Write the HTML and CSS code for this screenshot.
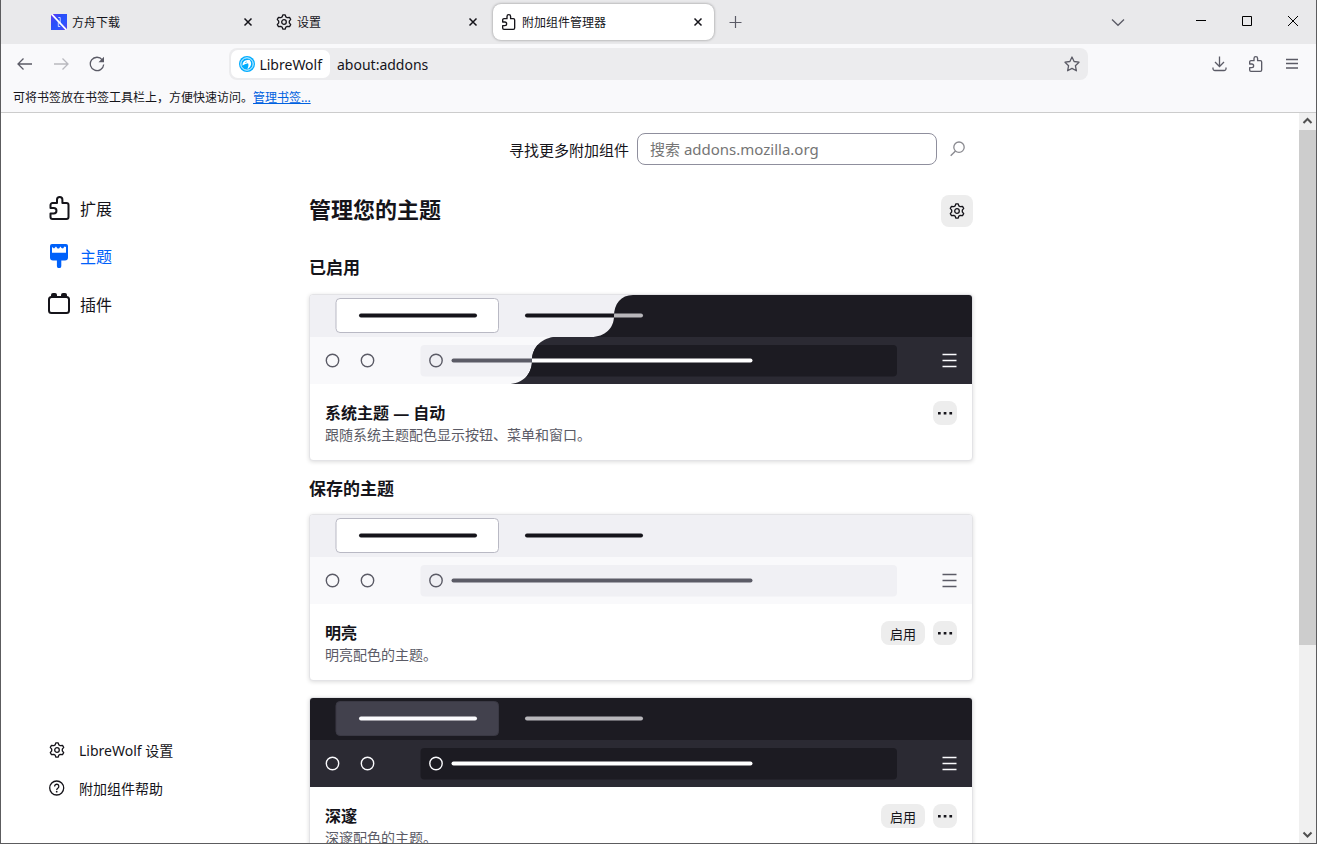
FILE: index.html
```html
<!DOCTYPE html>
<html lang="zh-CN">
<head>
<meta charset="utf-8">
<title>附加组件管理器</title>
<link rel="stylesheet" href="styles.css">
</head>
<body>
<svg class="defs" aria-hidden="true">
  <defs>
    <linearGradient id="ark-fill" x1="0" y1="0" x2="1" y2="1">
      <stop offset="0" stop-color="#6a35f5"/><stop offset=".35" stop-color="#2a4df8"/><stop offset=".65" stop-color="#2a55ff"/><stop offset="1" stop-color="#5a3cf0"/>
    </linearGradient>
    <clipPath id="dark-half">
      <path d="M323 0C311 0 304 9 304 21S295 42 281 42H247C232 42 222 52 222 65.500S213 89 198 89H662V0Z"/>
    </clipPath>
  </defs>
  <symbol id="gear" viewBox="0 0 16 16">
    <g fill="none" stroke="currentColor" stroke-width="1.300" stroke-linejoin="round">
      <path d="M6.900 .8H9.100L9.900 2.900 11.300 3.700 13.500 3.300 14.700 5.300 13.300 7.100V8.900L14.700 10.700 13.500 12.700 11.300 12.300 9.900 13.100 9.100 15.200H6.900L6.100 13.100 4.700 12.300 2.500 12.700 1.300 10.700 2.700 8.900V7.100L1.300 5.300 2.500 3.300 4.700 3.700 6.100 2.900Z"/>
      <circle cx="8" cy="8" r="2.300"/>
    </g>
  </symbol>
  <symbol id="puzzle" viewBox="0 0 24 24">
    <path d="M2.500 12V9a2 2 0 0 1 2-2H9V3.700a2.700 2.700 0 0 1 5.400 0V7H18.500a2 2 0 0 1 2 2V21a2 2 0 0 1-2 2H4.500a2 2 0 0 1-2-2V17.500H5.700a2.700 2.700 0 0 0 0-5.500Z" fill="none" stroke="currentColor" stroke-width="2" stroke-linejoin="round"/>
  </symbol>
  <symbol id="cross" viewBox="0 0 16 16">
    <path d="M4.500 4.500L11.500 11.500M11.500 4.500L4.500 11.500" fill="none" stroke="currentColor" stroke-width="1.500"/>
  </symbol>
  <symbol id="dots" viewBox="0 0 16 16">
    <path d="M1 7h2.700v2.500H1zM6.700 7h2.700v2.500H6.700zM12.400 7h2.700v2.500h-2.700z" fill="currentColor"/>
  </symbol>
  <symbol id="preview" viewBox="0 0 662 89">
    <rect class="pv-frame" width="662" height="43"/>
    <rect class="pv-toolbar" y="42" width="662" height="47"/>
    <rect class="pv-tab" x="26" y="3.500" width="162.500" height="34" rx="4"/>
    <rect class="pv-text" x="49" y="18.500" width="118" height="4" rx="2"/>
    <rect class="pv-text2" x="215" y="18.500" width="118" height="4" rx="2"/>
    <rect class="pv-field" x="110.500" y="50" width="476.500" height="31.500" rx="4"/>
    <g class="pv-icon">
      <circle cx="22.500" cy="65.500" r="6.200"/><circle cx="57.500" cy="65.500" r="6.200"/><circle cx="126" cy="65.500" r="6.200"/>
      <path d="M632.500 59.500h14M632.500 65.500h14M632.500 71.500h14"/>
    </g>
    <rect class="pv-line" x="141.500" y="63.500" width="301" height="4" rx="2"/>
  </symbol>
</svg>

<header class="chrome">
  <div class="tabbar">
    <div class="tabs">
      <div class="tab">
        <svg class="i16" viewBox="0 0 16 16"><path d="M0 0H16V16H0Z" fill="url(#ark-fill)"/><path d="M.5 0L15.500 16" stroke="#fff" stroke-width="1.700"/><path d="M7.300 3.500H9.200V10.500M7.300 7V12.500H9.200" fill="none" stroke="#fff" stroke-opacity=".75" stroke-width="1"/></svg>
        <span class="tab-label">方舟下载</span>
        <button class="close" aria-label="关闭标签页"><svg class="i16"><use href="#cross"/></svg></button>
      </div>
      <div class="tab">
        <svg class="i16"><use href="#gear"/></svg>
        <span class="tab-label">设置</span>
        <button class="close" aria-label="关闭标签页"><svg class="i16"><use href="#cross"/></svg></button>
      </div>
      <div class="tab active">
        <svg class="i16"><use href="#puzzle"/></svg>
        <span class="tab-label">附加组件管理器</span>
        <button class="close" aria-label="关闭标签页"><svg class="i16"><use href="#cross"/></svg></button>
      </div>
      <button class="newtab" aria-label="新建标签页"><svg class="i16" viewBox="0 0 16 16"><path d="M7.500 2V14M1.500 8.500H13.500" stroke="currentColor" stroke-width="1.200"/></svg></button>
    </div>
    <button class="alltabs" aria-label="列出所有标签页"><svg class="i16" viewBox="0 0 16 16"><path d="M2 5.500L8 11.300 14 5.500" fill="none" stroke="currentColor" stroke-width="1.300"/></svg></button>
    <div class="window-buttons">
      <button aria-label="最小化"><svg viewBox="0 0 12 12"><path d="M1 5.500H11"/></svg></button>
      <button aria-label="最大化"><svg viewBox="0 0 12 12"><path d="M1.500 1.500H10.500V10.500H1.500Z"/></svg></button>
      <button aria-label="关闭"><svg viewBox="0 0 12 12"><path d="M1 1L11 11M11 1L1 11"/></svg></button>
    </div>
  </div>

  <div class="navbar">
    <button class="nav" aria-label="后退"><svg class="i16" viewBox="0 0 16 16"><path d="M6.500 2.500L1 8 6.500 13.500M1 8H15" fill="none" stroke="currentColor" stroke-width="1.300"/></svg></button>
    <button class="nav" aria-label="前进" disabled><svg class="i16" viewBox="0 0 16 16"><path d="M9.500 2.500L15 8 9.500 13.500M15 8H1" fill="none" stroke="currentColor" stroke-width="1.300"/></svg></button>
    <button class="nav" aria-label="重新载入"><svg class="i16" viewBox="0 0 16 16"><path d="M13.300 3.800A6.700 6.700 0 1 0 14.700 8.500" fill="none" stroke="currentColor" stroke-width="1.300"/><path d="M15 .8V6.300H9.500Z" fill="currentColor"/></svg></button>
    <div class="spring"></div>
    <div class="urlbar">
      <button class="identity">
        <svg class="i16" viewBox="0 0 16 16"><circle cx="8" cy="8" r="8" fill="#00acff"/><circle cx="8" cy="8" r="6.200" fill="none" stroke="#fff" stroke-width=".9"/><path d="M3.600 9.500C3.300 6.300 5.200 4 8.200 3.900L10.600 3.700 11.300 5C12.900 7.200 12.200 10.300 9.800 12.300L8.300 13C9.500 10.600 9.800 8.400 9 7.200L5.800 8.200Z" fill="#fff"/><path d="M6.200 6.700L7.800 5.900" stroke="#00acff" stroke-width=".7"/></svg>
        <span>LibreWolf</span>
      </button>
      <input class="address" type="text" value="about:addons" aria-label="地址">
      <button class="star" aria-label="添加书签"><svg class="i16" viewBox="0 0 16 16"><path d="M8 1L10.100 5.500 15 6.200 11.400 9.700 12.400 14.800 8 12.400 3.600 14.800 4.600 9.700 1 6.200 5.900 5.500Z" fill="none" stroke="currentColor" stroke-width="1.300" stroke-linejoin="round"/></svg></button>
    </div>
    <div class="spring"></div>
    <button class="nav" aria-label="下载"><svg class="i16" viewBox="0 0 16 16"><path d="M7.500 .5V10.500M3 6L7.500 10.500 12 6M1 11.500V13A1.700 1.700 0 0 0 2.700 14.500H12.300A1.700 1.700 0 0 0 14 13V11.500" fill="none" stroke="currentColor" stroke-width="1.300"/></svg></button>
    <button class="nav" aria-label="扩展"><svg class="i16"><use href="#puzzle"/></svg></button>
    <button class="nav" aria-label="菜单"><svg class="i16" viewBox="0 0 16 16"><path d="M2 3.500H14M2 7.500H14M2 12H14" stroke="currentColor" stroke-width="1.300"/></svg></button>
  </div>

  <div class="bookmarks">可将书签放在书签工具栏上，方便快速访问。<a href="#">管理书签...</a></div>
</header>

<div class="viewport">
  <nav class="sidebar">
    <div class="categories">
      <a href="#" class="category"><svg class="i24"><use href="#puzzle"/></svg>扩展</a>
      <a href="#" class="category selected"><svg class="i24" viewBox="0 0 24 24"><path fill="currentColor" fill-rule="evenodd" d="M4 0H18A2 2 0 0 1 20 2V13.500A3 3 0 0 1 17 16.500H13.300V22A2.200 2.200 0 0 1 8.900 22V16.500H5A3 3 0 0 1 2 13.500V2A2 2 0 0 1 4 0ZM4 3V8.700H18V3L16.500 2.500 15 4.500 13.500 4 12.500 2.500 11 4.500 9.500 4.500 8 2.500 6 4.500Z"/></svg>主题</a>
      <a href="#" class="category"><svg class="i24" viewBox="0 0 24 24"><rect x="1" y="5" width="20" height="16" rx="2.500" fill="none" stroke="currentColor" stroke-width="2"/><path d="M3 5.500V3A2 2 0 0 1 5 1H7A2 2 0 0 1 9 3V5.500ZM13 5.500V3A2 2 0 0 1 15 1H17A2 2 0 0 1 19 3V5.500Z" fill="currentColor"/></svg>插件</a>
    </div>
    <div class="side-footer">
      <a href="#" class="foot-link"><svg class="i16"><use href="#gear"/></svg>LibreWolf 设置</a>
      <a href="#" class="foot-link"><svg class="i16" viewBox="0 0 16 16"><g fill="none" stroke="currentColor" stroke-width="1.300"><circle cx="7.700" cy="8" r="7"/><path d="M5.600 6.400A2.100 2.100 0 1 1 9 8C8 8.700 7.700 9 7.700 10"/></g><circle cx="7.700" cy="11.700" r=".9" fill="currentColor"/></svg>附加组件帮助</a>
    </div>
  </nav>

  <main class="main">
    <form class="search">
      <label for="addon-search">寻找更多附加组件</label>
      <input id="addon-search" type="text" placeholder="搜索 addons.mozilla.org">
      <button type="button" aria-label="搜索"><svg class="i16" viewBox="0 0 16 16"><path d="M5.500 9.900L.7 14.800" stroke="currentColor" stroke-width="1.400"/><circle cx="9" cy="6.200" r="5.200" fill="none" stroke="currentColor" stroke-width="1.300"/></svg></button>
    </form>
    <div class="title-row">
      <h1>管理您的主题</h1>
      <button class="tools" aria-label="工具"><svg class="i16"><use href="#gear"/></svg></button>
    </div>

    <section>
      <h2>已启用</h2>
      <article class="card">
        <svg class="preview light" viewBox="0 0 662 89"><use href="#preview"/><g clip-path="url(#dark-half)"><use class="dark" href="#preview"/></g></svg>
        <div class="card-body">
          <div class="card-text"><h3>系统主题 — 自动</h3><p>跟随系统主题配色显示按钮、菜单和窗口。</p></div>
          <button class="more" aria-label="更多选项"><svg class="i16"><use href="#dots"/></svg></button>
        </div>
      </article>
    </section>

    <section>
      <h2>保存的主题</h2>
      <article class="card">
        <svg class="preview light" viewBox="0 0 662 89"><use href="#preview"/></svg>
        <div class="card-body">
          <div class="card-text"><h3>明亮</h3><p>明亮配色的主题。</p></div>
          <button class="enable">启用</button>
          <button class="more" aria-label="更多选项"><svg class="i16"><use href="#dots"/></svg></button>
        </div>
      </article>
      <article class="card">
        <svg class="preview dark" viewBox="0 0 662 89"><use href="#preview"/></svg>
        <div class="card-body">
          <div class="card-text"><h3>深邃</h3><p>深邃配色的主题。</p></div>
          <button class="enable">启用</button>
          <button class="more" aria-label="更多选项"><svg class="i16"><use href="#dots"/></svg></button>
        </div>
      </article>
    </section>
  </main>

  <div class="scrollbar" aria-hidden="true">
    <svg class="arrow" viewBox="0 0 17 17"><path d="M4.500 10L8.500 6 12.500 10"/></svg>
    <div class="track"><div class="thumb"></div></div>
    <svg class="arrow" viewBox="0 0 17 17"><path d="M4.500 6.500L8.500 10.500 12.500 6.500"/></svg>
  </div>
</div>
</body>
</html>
```
FILE: styles.css
```css
* { box-sizing: border-box; }

body {
  margin: 0;
  height: 100vh;
  display: flex;
  flex-direction: column;
  overflow: hidden;
  border: 1px solid #5c5c5e;
  border-top: 0;
  background: #fff;
  color: #15141a;
  font-family: "Noto Sans", "Noto Sans CJK SC", sans-serif;
  font-size: 14px;
}

button {
  padding: 0;
  border: 0;
  background: none;
  color: inherit;
  font: inherit;
  display: flex;
  align-items: center;
  justify-content: center;
}

h1, h2, h3, p { margin: 0; }

.defs { position: absolute; width: 0; height: 0; }
.i16 { width: 16px; height: 16px; flex: none; }
.i24 { width: 24px; height: 24px; flex: none; }

/* Browser chrome */
.chrome { flex: none; background: #f9f9fb; border-bottom: 1px solid #ccc; }

.tabbar { display: flex; height: 44px; background: #e9e9eb; font-size: 12px; }
.tabs { display: flex; flex: 1; padding: 4px 0 4px 40px; }
.tab {
  display: flex;
  align-items: center;
  flex: 0 1 221px;
  gap: 5px;
  margin: 0 2px;
  padding: 0 8px;
  border-radius: 8px;
}
.tab.active { background: #fff; box-shadow: 0 0 3px rgba(0, 0, 0, .4); }
.tab-label { flex: 1; white-space: nowrap; overflow: hidden; }
.newtab { width: 40px; color: #5b5b66; }
.alltabs { width: 36px; margin-right: 42px; color: #5b5b66; }
.window-buttons { display: flex; }
.window-buttons button { width: 46px; height: 42px; }
.window-buttons svg { width: 12px; height: 12px; fill: none; stroke: #000; stroke-width: 1; }

.navbar { display: flex; align-items: center; height: 40px; padding: 0 6px; }
.nav { width: 36px; height: 32px; flex: none; color: #5b5b66; }
.nav:disabled { opacity: .4; }
.spring { flex: 2; }
.urlbar {
  flex: 15;
  display: flex;
  height: 32px;
  border-radius: 8px;
  background: #ececee;
}
.identity {
  gap: 4px;
  margin: 2px 0 2px 2px;
  padding: 0 8px;
  border-radius: 7px;
  background: #fff;
}
.address {
  flex: 1;
  min-width: 0;
  padding: 0 7px;
  border: 0;
  background: none;
  color: inherit;
  font: inherit;
}
.star { width: 32px; color: #5b5b66; }
.bookmarks { height: 28px; padding: 0 12px; font-size: 12px; line-height: 28px; }
.bookmarks a { color: #0061e0; }

/* Page */
.viewport { flex: 1; min-height: 0; display: flex; overflow: hidden; }

.sidebar {
  flex: none;
  width: 308px;
  display: flex;
  flex-direction: column;
  justify-content: space-between;
  padding: 71px 0 36px 47px;
}
.sidebar a { display: flex; align-items: center; color: inherit; text-decoration: none; }
.category { height: 48px; gap: 8px; font-size: 16px; }
.sidebar .selected { color: #0061fa; }
.foot-link { height: 38px; gap: 14px; padding-left: 1px; }

.main { flex: 0 1 664px; min-width: 0; }

.search { display: flex; justify-content: flex-end; align-items: center; padding-top: 20px; font-size: 15px; }
.search input {
  width: 300px;
  height: 32px;
  margin: 0 5px 0 8px;
  padding: 0 12px;
  border: 1px solid #8f8f9d;
  border-radius: 8px;
  background: #fff;
  color: inherit;
  font: inherit;
}
.search input::placeholder { color: #757575; }
.search button { width: 31px; height: 32px; color: #8a8a90; }

.title-row { display: flex; justify-content: space-between; align-items: flex-start; margin-top: 30px; }
h1 { font-size: 22px; line-height: 28px; }
.tools { width: 32px; height: 32px; border-radius: 8px; background: #ededed; }

h2 { font-size: 17px; line-height: 24px; margin: 29px 0 14px; }
section + section h2 { margin: 15px 0 13px; }

.card {
  overflow: hidden;
  margin-bottom: 16px;
  border: 1px solid #e3e3e6;
  border-radius: 4px;
  background: #fff;
  box-shadow: 0 1px 4px rgba(0, 0, 0, .14);
}
.preview { display: block; width: 100%; }
.card-body { display: flex; gap: 8px; padding: 17px 15px 15px; }
.card-text { flex: 1; }
h3 { font-size: 16px; line-height: 24px; }
.card p { height: 20px; color: #5b5b66; line-height: 20px; }
.enable, .more { height: 24px; border-radius: 8px; background: #ededed; }
.enable { width: 44px; font-size: 13px; }
.more { width: 24px; }

/* Theme preview palettes */
.light {
  --frame: #f0f0f4; --toolbar: #f9f9fb; --tab: #fff; --tab-edge: #b9b9c4; --text: #15141a;
  --text2: #15141a; --field: #f0f0f4; --icon: #5b5b66; --line: #5b5b66;
}
.dark {
  --frame: #1c1b22; --toolbar: #2b2a33; --tab: #42414d; --tab-edge: #3a3944; --text: #fbfbfe;
  --text2: #b8b7bb; --field: #1c1b22; --icon: #fbfbfe; --line: #fff;
}
.pv-frame { fill: var(--frame); }
.pv-toolbar { fill: var(--toolbar); }
.pv-tab { fill: var(--tab); stroke: var(--tab-edge); }
.pv-text { fill: var(--text); }
.pv-text2 { fill: var(--text2); }
.pv-field { fill: var(--field); }
.pv-icon { fill: none; stroke: var(--icon); stroke-width: 1.4; }
.pv-line { fill: var(--line); }

/* Scrollbar */
.scrollbar { width: 17px; margin-left: auto; display: flex; flex-direction: column; background: #f0f0f0; }
.arrow { width: 17px; height: 17px; fill: none; stroke: #505050; stroke-width: 2; }
.track { flex: 1; }
.thumb { height: 74%; background: #cdcdcd; }
```
